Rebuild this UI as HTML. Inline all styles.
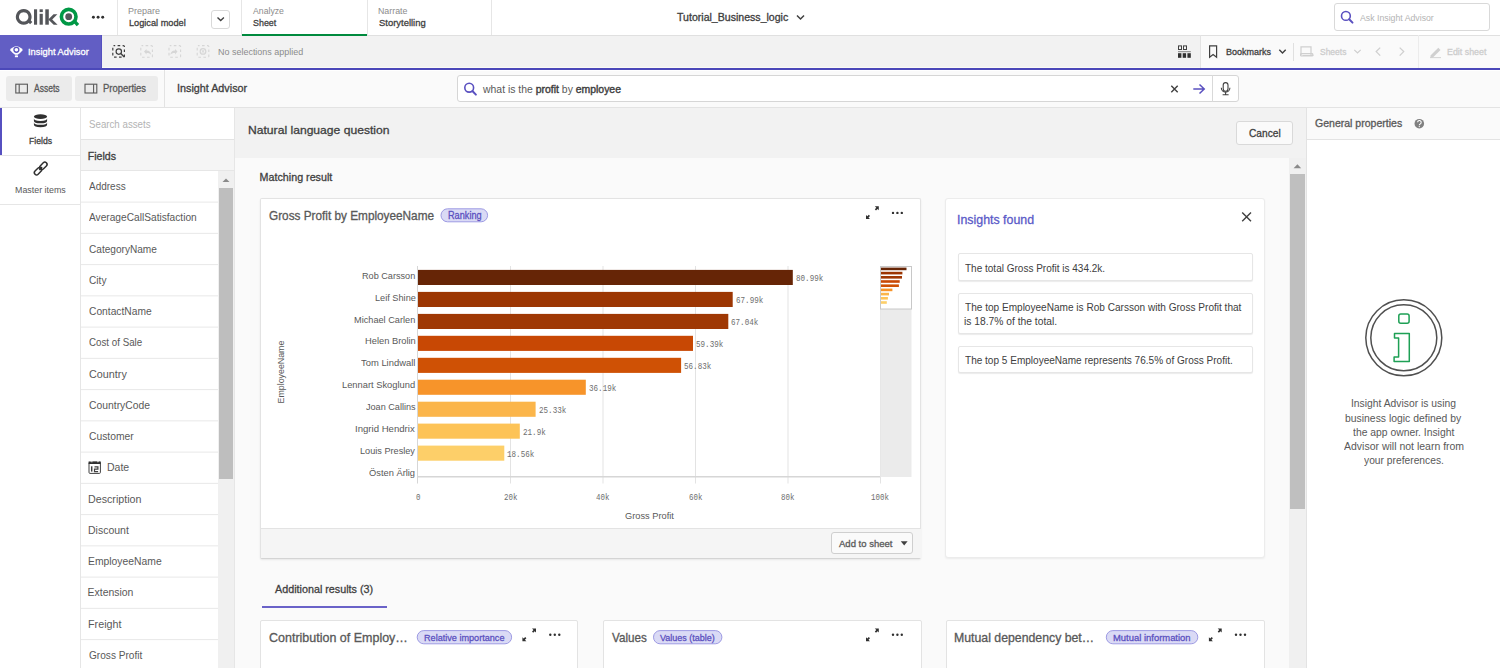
<!DOCTYPE html>
<html><head><meta charset="utf-8">
<style>
*{box-sizing:border-box;margin:0;padding:0}
html,body{width:1500px;height:668px;overflow:hidden;background:#fff;font-family:"Liberation Sans",sans-serif;color:#404040}
.a{position:absolute}
.t{position:absolute;white-space:nowrap;line-height:1;transform-origin:0 0}
.t b{font-weight:700;color:#404040}
svg{position:absolute;overflow:visible}
</style></head><body>
<!-- HEADER -->
<div class="a" style="left:0;top:0;width:1500px;height:36px;background:#fff;border-bottom:1px solid #e0e0e0"></div>
<div class="a" style="left:117px;top:0;width:1px;height:35px;background:#e6e6e6"></div>
<div class="a" style="left:241px;top:0;width:1px;height:35px;background:#e6e6e6"></div>
<div class="a" style="left:367px;top:0;width:1px;height:35px;background:#e6e6e6"></div>
<div class="a" style="left:491px;top:0;width:1px;height:35px;background:#e6e6e6"></div>
<div class="a" style="left:242px;top:34px;width:125px;height:2px;background:#008a3e"></div>
<div class="a" style="left:211px;top:10px;width:19px;height:19px;border:1px solid #d9d9d9;border-radius:3px;background:#fff"></div>
<svg style="left:0;top:0" width="1500" height="35">
  <!-- Qlik logo -->
  <g fill="#54565a">
    <path d="M23.7 9 a7.9 7.9 0 1 0 0.01 0z M23.7 12.2 a4.7 4.7 0 1 1 -0.01 0z" fill-rule="evenodd"/>
    <path d="M27.5 21.5 l2.2-2.2 l2.6 2.6 l-2.2 2.4z"/>
    <rect x="34" y="9.3" width="3.1" height="15.4"/>
    <rect x="39.6" y="9.3" width="3.2" height="2.8"/>
    <rect x="39.6" y="13.8" width="3.2" height="10.9"/>
    <rect x="45.3" y="9.3" width="3.5" height="15.4"/>
    <path d="M48.3 19.5 l5.2-5.2 h3.9 l-5.2 5.2 l5.4 5.2 h-3.9z"/>
  </g>
  <circle cx="68.7" cy="16.7" r="7.3" fill="none" stroke="#009845" stroke-width="3.6"/>
  <circle cx="68.7" cy="16.7" r="3.4" fill="#54565a"/>
  <path d="M72.5 21.5 l2.4-2.2 l4.3 4.6 l-2.5 2.3z" fill="#009845"/>
  <g fill="#303030"><circle cx="93.4" cy="17.2" r="1.45"/><circle cx="98.1" cy="17.2" r="1.45"/><circle cx="102.7" cy="17.2" r="1.45"/></g>
  <path d="M217.5 17.5 l3.2 3 l3.2 -3" fill="none" stroke="#404040" stroke-width="1.4"/>
  <path d="M797 15.5 l3.5 3.5 l3.5 -3.5" fill="none" stroke="#404040" stroke-width="1.5"/>
</svg>
<div class="a" style="left:1334px;top:3px;width:156px;height:28px;border:1px solid #d9d9d9;border-radius:3px;background:#fff"></div>
<svg style="left:1340px;top:10px" width="16" height="16">
  <circle cx="5.9" cy="5.9" r="4.4" fill="none" stroke="#5a50c0" stroke-width="1.6"/>
  <path d="M9.2 9.2 l3.3 3.4" stroke="#5a50c0" stroke-width="2" stroke-linecap="round"/>
</svg>

<!-- TOOLBAR -->
<div class="a" style="left:0;top:36px;width:1500px;height:32px;background:#f2f2f2;border-bottom:1px solid #fafaf6"></div>
<div class="a" style="left:1201px;top:36px;width:299px;height:32px;background:#fafafa"></div>
<div class="a" style="left:1200px;top:35px;width:1px;height:33px;background:#e3e3e3"></div>
<div class="a" style="left:1418px;top:35px;width:1px;height:33px;background:#ececec"></div>
<div class="a" style="left:1293px;top:43px;width:1px;height:18px;background:#e0e0e0"></div>
<div class="a" style="left:0;top:35px;width:102px;height:33px;background:#625ec4;border-right:1px solid #5550c0"></div>
<div class="a" style="left:0;top:68px;width:1500px;height:2px;background:#4b48b9"></div>
<svg style="left:0;top:35px" width="1500" height="33">
  <!-- insight advisor eye/bulb icon -->
  <path d="M9.9 14.9 Q16.4 7.4 22.9 14.9 Q20.2 18 17.7 19.8 L15.1 19.8 Q12.6 18 9.9 14.9z" fill="#fff"/>
  <circle cx="16.4" cy="14.8" r="3.1" fill="#5a55c0"/>
  <circle cx="16.4" cy="14.8" r="1.8" fill="#fff"/>
  <rect x="15.3" y="19.6" width="2.2" height="1" fill="#d8d8f0"/>
  <rect x="14.9" y="20.6" width="3.1" height="1.6" fill="#fff"/>
  <!-- selection tools -->
  <g fill="none" stroke="#404040" stroke-width="1.2" stroke-dasharray="2.6 2.4" stroke-dashoffset="1.2">
    <rect x="112.8" y="10.6" width="11.6" height="11.6" rx="1"/>
  </g>
  <circle cx="118.8" cy="16.6" r="2.7" fill="none" stroke="#404040" stroke-width="1.2"/>
  <path d="M120.8 18.6 l3.4 3.4" stroke="#404040" stroke-width="1.4"/>
  <g fill="none" stroke="#d6d6d6" stroke-width="1.1" stroke-dasharray="2.6 2.4" stroke-dashoffset="1.2">
    <rect x="140.8" y="10.6" width="11.6" height="11.6" rx="1"/>
    <rect x="169" y="10.6" width="11.6" height="11.6" rx="1"/>
    <rect x="197.2" y="10.6" width="11.6" height="11.6" rx="1"/>
  </g>
  <path d="M144 16.5 l2.5-2.5 v1.6 c3 0 4.5 1.5 4.5 4.5 c-0.8-1.6 -2-2.1 -4.5-2.1 v1.6z" fill="#d6d6d6"/>
  <path d="M177.5 16.5 l-2.5-2.5 v1.6 c-3 0 -4.5 1.5 -4.5 4.5 c0.8-1.6 2-2.1 4.5-2.1 v1.6z" fill="#d6d6d6"/>
  <circle cx="203" cy="16.4" r="2.8" fill="none" stroke="#d6d6d6" stroke-width="1.2"/>
  <path d="M201.7 15.1 l2.6 2.6 M204.3 15.1 l-2.6 2.6" stroke="#d6d6d6" stroke-width="1"/>
  <!-- right icons -->
  <g fill="none" stroke="#404040" stroke-width="1">
    <rect x="1178.5" y="10.9" width="3" height="3.6"/>
    <rect x="1183.5" y="10.9" width="3" height="3.6"/>
  </g>
  <rect x="1178" y="16.2" width="12.8" height="1" fill="#808080"/>
  <g fill="#303030">
    <rect x="1178" y="18.2" width="3.4" height="4.6"/>
    <rect x="1182.7" y="18.2" width="3.4" height="4.6"/>
    <rect x="1187.4" y="18.2" width="3.4" height="4.6"/>
  </g>
  <path d="M1209.6 10.9 h7 v11.4 l-3.5-2.8 l-3.5 2.8z" fill="none" stroke="#404040" stroke-width="1.2"/>
  <path d="M1279.3 14.8 l3.2 3.2 l3.2-3.2" fill="none" stroke="#404040" stroke-width="1.4"/>
  <g fill="none" stroke="#cfcfcf" stroke-width="1.2">
    <path d="M1301 20.5 v-8.6 h10 v8.6"/>
    <path d="M1302.5 20.5 h10.3 v-0.8"/>
    <rect x="1300.6" y="18.6" width="12.2" height="2.4" rx="0.8"/>
  </g>
  <path d="M1354.3 14.8 l3.2 3.2 l3.2-3.2" fill="none" stroke="#cfcfcf" stroke-width="1.2"/>
  <path d="M1380.2 12.6 l-4 4 l4 4" fill="none" stroke="#cfcfcf" stroke-width="1.3"/>
  <path d="M1399.7 12.6 l4 4 l-4 4" fill="none" stroke="#cfcfcf" stroke-width="1.3"/>
  <path d="M1430.5 20.5 l7.8-7.8 l2.2 2.2 l-7.8 7.8 h-2.2z" fill="#d0d0d0"/>
  <rect x="1430" y="22.2" width="11" height="0.9" fill="#d0d0d0"/>
</svg>

<!-- ROW3 -->
<div class="a" style="left:0;top:70px;width:1500px;height:38px;background:#fafafa;border-top:1px solid #fff;border-bottom:1px solid #e3e3e3"></div>
<div class="a" style="left:6px;top:76px;width:66px;height:25px;background:#ebebeb;border-radius:3px"></div>
<div class="a" style="left:75px;top:76px;width:83px;height:25px;background:#ebebeb;border-radius:3px"></div>
<div class="a" style="left:164px;top:70px;width:1px;height:37px;background:#e3e3e3"></div>
<div class="a" style="left:457px;top:75px;width:782px;height:27px;background:#fff;border:1px solid #d6d6d6;border-radius:3px"></div>
<div class="a" style="left:1212px;top:75px;width:1px;height:27px;background:#d9d9d9"></div>
<svg style="left:0;top:70px" width="1500" height="37">
  <g fill="none" stroke="#595959" stroke-width="1.1">
    <rect x="15.8" y="14.2" width="11.6" height="8.8"/>
    <path d="M19.2 14.2 v8.8"/>
    <rect x="85" y="14.2" width="11.8" height="8.8"/>
    <path d="M93.6 14.2 v8.8"/>
  </g>
  <circle cx="469.2" cy="17.7" r="4.4" fill="none" stroke="#5a50c0" stroke-width="1.6"/>
  <path d="M472.4 21 l3.5 3.6" stroke="#5a50c0" stroke-width="2" stroke-linecap="round"/>
  <path d="M1171.3 15.8 l6.4 6.4 M1177.7 15.8 l-6.4 6.4" stroke="#404040" stroke-width="1.4"/>
  <path d="M1193.3 19 h11.5 M1199.5 14.5 l4.7 4.5 l-4.7 4.5" fill="none" stroke="#5a50c0" stroke-width="1.5"/>
  <rect x="1223.2" y="12.6" width="4.8" height="8.6" rx="2.4" fill="none" stroke="#404040" stroke-width="1.1"/>
  <path d="M1221.3 17.8 a4.2 4.2 0 0 0 8.6 0 M1225.6 22 v2.6 M1222.6 24.8 h6" fill="none" stroke="#404040" stroke-width="1.1"/>
</svg>

<!-- LEFT NAV -->
<div class="a" style="left:0;top:108px;width:81px;height:560px;background:#fff;border-right:1px solid #e6e6e6"></div>
<div class="a" style="left:0;top:108px;width:2px;height:47px;background:#5650c0"></div>
<div class="a" style="left:0;top:155px;width:80px;height:1px;background:#e6e6e6"></div>
<div class="a" style="left:0;top:204px;width:80px;height:1px;background:#e6e6e6"></div>
<svg style="left:0;top:107px" width="80" height="100">
  <g fill="#303030">
    <ellipse cx="40.5" cy="9.6" rx="6.6" ry="2.4"/>
    <path d="M33.9 11.5 q0 2.4 6.6 2.4 q6.6 0 6.6 -2.4 v2.2 q0 2.6 -6.6 2.6 q-6.6 0 -6.6 -2.6z"/>
    <path d="M33.9 15.4 q0 2.4 6.6 2.4 q6.6 0 6.6 -2.4 v2.2 q0 2.6 -6.6 2.6 q-6.6 0 -6.6 -2.6z"/>
  </g>
  <g fill="none" stroke="#303030" stroke-width="1.5">
    <rect x="41.2" y="54.6" width="4.4" height="8.4" rx="2.2" transform="rotate(45 43.4 58.8)"/>
    <rect x="35.8" y="60" width="4.4" height="8.4" rx="2.2" transform="rotate(45 38 64.2)"/>
    <path d="M39.3 62.9 l2.8-2.8"/>
  </g>
</svg>

<!-- FIELDS LIST -->
<div class="a" style="left:80px;top:108px;width:155px;height:560px;background:#fff;border-left:1px solid #e6e6e6;border-right:1px solid #e6e6e6"></div>
<div class="a" style="left:81px;top:139px;width:153px;height:32px;background:#f5f5f5;border-top:1px solid #e3e3e3;border-bottom:1px solid #e6e6e6"></div>
<div class="a" style="left:218px;top:171px;width:16px;height:497px;background:#f0f0f0"></div>
<div class="a" style="left:219px;top:188px;width:14px;height:291px;background:#bebebe"></div>
<svg style="left:218px;top:171px" width="16" height="20"><path d="M4.5 11 l3.5-3.5 l3.5 3.5z" fill="#8a8a8a"/></svg>
<div id="flist"></div>
<svg style="left:80px;top:107px" width="140" height="561">
  <g fill="#e8e8e8"><rect x="1" y="94.60" width="137" height="1"/><rect x="1" y="125.85" width="137" height="1"/><rect x="1" y="157.10" width="137" height="1"/><rect x="1" y="188.35" width="137" height="1"/><rect x="1" y="219.60" width="137" height="1"/><rect x="1" y="250.85" width="137" height="1"/><rect x="1" y="282.10" width="137" height="1"/><rect x="1" y="313.35" width="137" height="1"/><rect x="1" y="344.60" width="137" height="1"/><rect x="1" y="375.85" width="137" height="1"/><rect x="1" y="407.10" width="137" height="1"/><rect x="1" y="438.35" width="137" height="1"/><rect x="1" y="469.60" width="137" height="1"/><rect x="1" y="500.85" width="137" height="1"/><rect x="1" y="532.10" width="137" height="1"/></g>
  <rect x="9" y="355.2" width="11.4" height="11.2" rx="1" fill="none" stroke="#404040" stroke-width="1"/>
  <path d="M8.6 354.4 h1.6 l0.8 1 h1.6 v-0.8 h4.4 v0.8 h1.4 l0.8-1 h1.6 v2.6 h-12.2z" fill="#303030"/>
  <path d="M11.7 359.3 v5.3" stroke="#404040" stroke-width="1.5"/>
  <path d="M14.5 359.8 h3.4 v2.4 h-3.4 v2.4 h3.6" fill="none" stroke="#404040" stroke-width="1.2"/>
</svg>

<!-- MAIN -->
<div class="a" style="left:235px;top:108px;width:1071px;height:560px;background:#fafafa"></div>
<div class="a" style="left:235px;top:108px;width:1071px;height:49.5px;background:#f2f2f2"></div>
<div class="a" style="left:1236px;top:120.5px;width:57px;height:24.5px;background:#fafafa;border:1px solid #d9d9d9;border-radius:3px"></div>
<div class="a" style="left:1289px;top:158px;width:17px;height:510px;background:#f0f0f0"></div>
<div class="a" style="left:1290px;top:174px;width:15px;height:334.5px;background:#bfbfbf"></div>
<svg style="left:1289px;top:158px" width="17" height="16"><path d="M4.6 10.2 l3.8-4 l3.8 4z" fill="#8a8a8a"/></svg>

<!-- matching result card -->
<div class="a" style="left:259.6px;top:197.5px;width:661.9px;height:361px;background:#fff;border:1px solid #e3e3e3;border-bottom-color:#d4d4d4;border-radius:2px;box-shadow:0 1px 2px rgba(0,0,0,0.08)"></div>
<div class="a" style="left:261px;top:528px;width:659.5px;height:29.5px;background:#f5f5f5;border-top:1px solid #e3e3e3"></div>
<div class="a" style="left:831px;top:532px;width:82px;height:21.5px;background:#fafafa;border:1px solid #cfcfcf;border-radius:3px"></div>
<svg style="left:0;top:0" width="1500" height="668">
  <path d="M900.8 541.3 h6.8 l-3.4 4.2z" fill="#404040"/>
  <!-- badge -->
  <rect x="441" y="208.8" width="46.6" height="13" rx="6.5" fill="#dadaf5" stroke="#9d9ae3" stroke-width="1"/>
  <!-- expand & dots -->
  <g fill="#303030">
    <path d="M874.8 206.3 h4 v4 l-1.3-1.3 l-1.5 1.5 l-1.2-1.2 l1.5-1.5z"/>
    <path d="M870.0 218.9 h-4 v-4 l1.3 1.3 l1.5-1.5 l1.2 1.2 l-1.5 1.5z"/>
    <circle cx="893" cy="212.9" r="1.2"/><circle cx="897.4" cy="212.9" r="1.2"/><circle cx="901.8" cy="212.9" r="1.2"/>
  </g>
  <!-- chart grid -->
  <g fill="#e3e3e3">
    <rect x="510" y="266" width="1" height="217.5"/>
    <rect x="602.5" y="266" width="1" height="217.5"/>
    <rect x="695" y="266" width="1" height="217.5"/>
    <rect x="787.5" y="266" width="1" height="217.5"/>
    <rect x="880" y="266" width="1" height="217.5"/>
  </g>
  <rect x="417" y="266" width="1" height="217.5" fill="#d6d6d6"/>
  <rect x="417" y="476" width="463" height="1.5" fill="#d6d6d6"/>
  <!-- bars -->
  <g>
    <rect x="418" y="269.9" width="374.8" height="15.1" fill="#662506"/>
    <rect x="418" y="291.9" width="314.7" height="15.1" fill="#9c3603"/>
    <rect x="418" y="313.9" width="310.3" height="15.1" fill="#9f3804"/>
    <rect x="418" y="335.8" width="275.0" height="15.1" fill="#c84804"/>
    <rect x="418" y="357.8" width="263.1" height="15.1" fill="#cf5105"/>
    <rect x="418" y="379.7" width="167.8" height="15.1" fill="#f7942a"/>
    <rect x="418" y="401.7" width="117.6" height="15.1" fill="#fbb54a"/>
    <rect x="418" y="423.6" width="101.8" height="15.1" fill="#fdc357"/>
    <rect x="418" y="445.6" width="86.3" height="15.1" fill="#fdcf69"/>
  </g>
  <!-- minimap -->
  <rect x="880.5" y="309" width="31" height="168" fill="#ebebeb"/>
  <rect x="880.5" y="266.5" width="31" height="42.5" fill="#fff" stroke="#c8c8c8" stroke-width="1"/>
  <g>
    <rect x="881" y="267.6" width="25.5" height="2.6" fill="#662506"/>
    <rect x="881" y="271.8" width="21.4" height="2.6" fill="#9c3603"/>
    <rect x="881" y="276" width="21" height="2.6" fill="#9f3804"/>
    <rect x="881" y="280.2" width="18.7" height="2.6" fill="#c84804"/>
    <rect x="881" y="284.4" width="17.9" height="2.6" fill="#cf5105"/>
    <rect x="881" y="288.6" width="11.4" height="2.6" fill="#f7942a"/>
    <rect x="881" y="292.8" width="8" height="2.6" fill="#fbb54a"/>
    <rect x="881" y="297" width="6.9" height="2.6" fill="#fdc357"/>
    <rect x="881" y="301.2" width="5.8" height="2.6" fill="#fdcf69"/>
  </g>
</svg>

<!-- insights card -->
<div class="a" style="left:945.3px;top:197.5px;width:319.7px;height:360px;background:#fff;border:1px solid #ececec;border-radius:3px;box-shadow:0 1px 2px rgba(0,0,0,0.06)"></div>
<div class="a" style="left:957.5px;top:253px;width:295.5px;height:27.5px;background:#fff;border:1px solid #e6e6e6;border-radius:2px;box-shadow:0 1px 1px rgba(0,0,0,0.08)"></div>
<div class="a" style="left:957.5px;top:292.8px;width:295.5px;height:40.8px;background:#fff;border:1px solid #e6e6e6;border-radius:2px;box-shadow:0 1px 1px rgba(0,0,0,0.08)"></div>
<div class="a" style="left:957.5px;top:345.5px;width:295.5px;height:27.5px;background:#fff;border:1px solid #e6e6e6;border-radius:2px;box-shadow:0 1px 1px rgba(0,0,0,0.08)"></div>
<svg style="left:0;top:0" width="1500" height="668">
  <path d="M1242.2 212.4 l8.8 8.8 M1251 212.4 l-8.8 8.8" stroke="#404040" stroke-width="1.4"/>
</svg>

<!-- additional results -->
<div class="a" style="left:262px;top:606px;width:125px;height:2px;background:#6a62c8"></div>
<div class="a" style="left:259.6px;top:620px;width:318.9px;height:60px;background:#fff;border:1px solid #e3e3e3;border-radius:2px"></div>
<div class="a" style="left:603px;top:620px;width:318.5px;height:60px;background:#fff;border:1px solid #e3e3e3;border-radius:2px"></div>
<div class="a" style="left:946px;top:620px;width:318.5px;height:60px;background:#fff;border:1px solid #e3e3e3;border-radius:2px"></div>
<svg style="left:0;top:0" width="1500" height="668">
  <rect x="417.2" y="630.6" width="94.4" height="13.2" rx="6.6" fill="#dadaf5" stroke="#9d9ae3" stroke-width="1"/>
  <rect x="653.5" y="630.6" width="68.4" height="13.2" rx="6.6" fill="#dadaf5" stroke="#9d9ae3" stroke-width="1"/>
  <rect x="1106.3" y="630.6" width="91.5" height="13.2" rx="6.6" fill="#dadaf5" stroke="#9d9ae3" stroke-width="1"/>
  <g fill="#303030">
    <path d="M532.0 628.6 h4 v4 l-1.3-1.3 l-1.5 1.5 l-1.2-1.2 l1.5-1.5z"/>
    <path d="M526.4 641.2 h-4 v-4 l1.3 1.3 l1.5-1.5 l1.2 1.2 l-1.5 1.5z"/>
    <circle cx="550.3" cy="634.7" r="1.2"/><circle cx="554.8" cy="634.7" r="1.2"/><circle cx="559.3" cy="634.7" r="1.2"/>
    <path d="M874.8 628.6 h4 v4 l-1.3-1.3 l-1.5 1.5 l-1.2-1.2 l1.5-1.5z"/>
    <path d="M870.0 641.2 h-4 v-4 l1.3 1.3 l1.5-1.5 l1.2 1.2 l-1.5 1.5z"/>
    <circle cx="893" cy="634.7" r="1.2"/><circle cx="897.4" cy="634.7" r="1.2"/><circle cx="901.8" cy="634.7" r="1.2"/>
    <path d="M1217.7 628.6 h4 v4 l-1.3-1.3 l-1.5 1.5 l-1.2-1.2 l1.5-1.5z"/>
    <path d="M1212.9 641.2 h-4 v-4 l1.3 1.3 l1.5-1.5 l1.2 1.2 l-1.5 1.5z"/>
    <circle cx="1236" cy="634.7" r="1.2"/><circle cx="1240.5" cy="634.7" r="1.2"/><circle cx="1245" cy="634.7" r="1.2"/>
  </g>
</svg>

<!-- RIGHT PANEL -->
<div class="a" style="left:1306px;top:108px;width:194px;height:560px;background:#fff;border-left:1px solid #e3e3e3"></div>
<div class="a" style="left:1307px;top:108px;width:193px;height:31.5px;background:#fafafa;border-bottom:1px solid #e3e3e3"></div>
<svg style="left:0;top:0" width="1500" height="668">
  <circle cx="1419.3" cy="123.7" r="4.8" fill="#808080"/>
  <path d="M1417.6 122.3 a1.8 1.8 0 1 1 2.6 1.6 q-0.9 0.4 -0.9 1.3" fill="none" stroke="#fff" stroke-width="1.1"/>
  <circle cx="1419.3" cy="126.6" r="0.65" fill="#fff"/>
  <circle cx="1403.8" cy="337.8" r="38" fill="none" stroke="#505050" stroke-width="1.5"/>
  <circle cx="1403.8" cy="337.8" r="33" fill="none" stroke="#505050" stroke-width="1.5"/>
  <rect x="1398.8" y="314" width="10.3" height="9.3" rx="2" fill="none" stroke="#1ea055" stroke-width="1.5"/>
  <path d="M1394.5 333.4 h14.8 v28 h-15.2 v-4.5 h4.5 v-19 h-4.1z" fill="none" stroke="#1ea055" stroke-width="1.5" stroke-linejoin="round"/>
</svg>
<div class="t" style="left:127.97px;top:6.61px;font-size:8.7px;font-weight:400;color:#8c8c8c;transform:scaleX(1.0345)">Prepare</div>
<div class="t" style="left:129.00px;top:17.92px;font-size:9.86px;font-weight:400;-webkit-text-stroke:0.3px #404040;color:#404040;transform:scaleX(0.9333)">Logical model</div>
<div class="t" style="left:253.00px;top:6.81px;font-size:8.7px;font-weight:400;color:#8c8c8c;transform:scaleX(1.0000)">Analyze</div>
<div class="t" style="left:253.00px;top:18.32px;font-size:9.86px;font-weight:400;-webkit-text-stroke:0.3px #404040;color:#404040;transform:scaleX(0.9038)">Sheet</div>
<div class="t" style="left:377.59px;top:6.81px;font-size:8.7px;font-weight:400;color:#8c8c8c;transform:scaleX(1.0143)">Narrate</div>
<div class="t" style="left:378.60px;top:18.32px;font-size:9.86px;font-weight:400;-webkit-text-stroke:0.3px #404040;color:#404040;transform:scaleX(0.9592)">Storytelling</div>
<div class="t" style="left:676.50px;top:13.00px;font-size:10.0px;font-weight:400;-webkit-text-stroke:0.3px #404040;color:#404040;transform:scaleX(1.0571)">Tutorial_Business_logic</div>
<div class="t" style="left:1359.80px;top:13.81px;font-size:9.28px;font-weight:400;color:#b3b3b3;transform:scaleX(0.9423)">Ask Insight Advisor</div>
<div class="t" style="left:28.22px;top:47.37px;font-size:9.57px;font-weight:400;-webkit-text-stroke:0.3px #ffffff;color:#ffffff;transform:scaleX(0.9770)">Insight Advisor</div>
<div class="t" style="left:217.82px;top:47.54px;font-size:9.13px;font-weight:400;color:#8c8c8c;transform:scaleX(0.9824)">No selections applied</div>
<div class="t" style="left:1225.90px;top:47.94px;font-size:9.13px;font-weight:400;-webkit-text-stroke:0.3px #404040;color:#404040;transform:scaleX(0.9848)">Bookmarks</div>
<div class="t" style="left:1319.60px;top:46.62px;font-size:9.86px;font-weight:400;-webkit-text-stroke:0.3px #cccccc;color:#cccccc;transform:scaleX(0.8613)">Sheets</div>
<div class="t" style="left:1447.40px;top:46.62px;font-size:9.86px;font-weight:400;-webkit-text-stroke:0.3px #cccccc;color:#cccccc;transform:scaleX(0.9000)">Edit sheet</div>
<div class="t" style="left:34.30px;top:84.40px;font-size:10.0px;font-weight:400;-webkit-text-stroke:0.3px #595959;color:#595959;transform:scaleX(0.8500)">Assets</div>
<div class="t" style="left:103.05px;top:84.40px;font-size:10.0px;font-weight:400;-webkit-text-stroke:0.3px #595959;color:#595959;transform:scaleX(0.9455)">Properties</div>
<div class="t" style="left:177.47px;top:84.33px;font-size:10.43px;font-weight:400;-webkit-text-stroke:0.3px #404040;color:#404040;transform:scaleX(1.0343)">Insight Advisor</div>
<div class="t" style="left:483.00px;top:84.78px;font-size:10.14px;font-weight:400;color:#595959;transform:scaleX(1.0299)">what is the <span style="-webkit-text-stroke:0.4px #404040;color:#404040">profit</span> by <span style="-webkit-text-stroke:0.4px #404040;color:#404040">employee</span></div>
<div class="t" style="left:29.10px;top:137.41px;font-size:9.28px;font-weight:400;-webkit-text-stroke:0.3px #404040;color:#404040;transform:scaleX(0.9360)">Fields</div>
<div class="t" style="left:14.84px;top:185.71px;font-size:9.28px;font-weight:400;color:#595959;transform:scaleX(0.9577)">Master items</div>
<div class="t" style="left:89.48px;top:119.21px;font-size:10.58px;font-weight:400;color:#b3b3b3;transform:scaleX(0.9182)">Search assets</div>
<div class="t" style="left:87.80px;top:151.21px;font-size:10.58px;font-weight:400;-webkit-text-stroke:0.3px #404040;color:#404040;transform:scaleX(1.0000)">Fields</div>
<div class="t" style="left:88.60px;top:182.13px;font-size:10.43px;font-weight:400;color:#595959;transform:scaleX(0.9579)">Address</div>
<div class="t" style="left:88.60px;top:213.38px;font-size:10.43px;font-weight:400;color:#595959;transform:scaleX(0.9755)">AverageCallSatisfaction</div>
<div class="t" style="left:88.60px;top:244.63px;font-size:10.43px;font-weight:400;color:#595959;transform:scaleX(0.9686)">CategoryName</div>
<div class="t" style="left:88.60px;top:275.88px;font-size:10.43px;font-weight:400;color:#595959;transform:scaleX(0.9722)">City</div>
<div class="t" style="left:88.60px;top:307.13px;font-size:10.43px;font-weight:400;color:#595959;transform:scaleX(0.9828)">ContactName</div>
<div class="t" style="left:88.60px;top:338.38px;font-size:10.43px;font-weight:400;color:#595959;transform:scaleX(0.9368)">Cost of Sale</div>
<div class="t" style="left:88.60px;top:369.63px;font-size:10.43px;font-weight:400;color:#595959;transform:scaleX(1.0361)">Country</div>
<div class="t" style="left:88.60px;top:400.88px;font-size:10.43px;font-weight:400;color:#595959;transform:scaleX(0.9934)">CountryCode</div>
<div class="t" style="left:88.60px;top:432.13px;font-size:10.43px;font-weight:400;color:#595959;transform:scaleX(0.9889)">Customer</div>
<div class="t" style="left:107.49px;top:463.38px;font-size:10.43px;font-weight:400;color:#595959;transform:scaleX(1.0095)">Date</div>
<div class="t" style="left:87.57px;top:494.63px;font-size:10.43px;font-weight:400;color:#595959;transform:scaleX(1.0255)">Description</div>
<div class="t" style="left:87.59px;top:525.88px;font-size:10.43px;font-weight:400;color:#595959;transform:scaleX(1.0075)">Discount</div>
<div class="t" style="left:87.61px;top:557.13px;font-size:10.43px;font-weight:400;color:#595959;transform:scaleX(0.9932)">EmployeeName</div>
<div class="t" style="left:87.60px;top:588.38px;font-size:10.43px;font-weight:400;color:#595959;transform:scaleX(1.0000)">Extension</div>
<div class="t" style="left:87.57px;top:619.63px;font-size:10.43px;font-weight:400;color:#595959;transform:scaleX(1.0323)">Freight</div>
<div class="t" style="left:88.60px;top:650.88px;font-size:10.43px;font-weight:400;color:#595959;transform:scaleX(0.9691)">Gross Profit</div>
<div class="t" style="left:247.97px;top:124.12px;font-size:11.74px;font-weight:400;-webkit-text-stroke:0.3px #404040;color:#404040;transform:scaleX(1.0331)">Natural language question</div>
<div class="t" style="left:1249.00px;top:128.21px;font-size:11.16px;font-weight:400;-webkit-text-stroke:0.3px #404040;color:#404040;transform:scaleX(0.9118)">Cancel</div>
<div class="t" style="left:259.60px;top:172.19px;font-size:10.72px;font-weight:400;-webkit-text-stroke:0.3px #404040;color:#404040;transform:scaleX(1.0000)">Matching result</div>
<div class="t" style="left:269.40px;top:209.56px;font-size:12.17px;font-weight:400;-webkit-text-stroke:0.3px #595959;color:#595959;transform:scaleX(0.9694)">Gross Profit by EmployeeName</div>
<div class="t" style="left:447.69px;top:211.28px;font-size:10.14px;font-weight:400;-webkit-text-stroke:0.3px #5a50c0;color:#5a50c0;transform:scaleX(0.9056)">Ranking</div>
<div class="t" style="left:839.10px;top:538.92px;font-size:9.86px;font-weight:400;-webkit-text-stroke:0.3px #595959;color:#595959;transform:scaleX(0.9679)">Add to sheet</div>
<div class="t" style="left:275.30px;top:583.85px;font-size:11.59px;font-weight:400;-webkit-text-stroke:0.3px #404040;color:#404040;transform:scaleX(0.9295)">Additional results (3)</div>
<div class="t" style="left:268.70px;top:631.56px;font-size:12.17px;font-weight:400;-webkit-text-stroke:0.3px #595959;color:#595959;transform:scaleX(1.0276)">Contribution of Employ…</div>
<div class="t" style="left:424.30px;top:633.32px;font-size:9.86px;font-weight:400;-webkit-text-stroke:0.3px #5a50c0;color:#5a50c0;transform:scaleX(0.9253)">Relative importance</div>
<div class="t" style="left:612.00px;top:632.16px;font-size:12.17px;font-weight:400;-webkit-text-stroke:0.3px #595959;color:#595959;transform:scaleX(0.9583)">Values</div>
<div class="t" style="left:660.00px;top:633.32px;font-size:9.86px;font-weight:400;-webkit-text-stroke:0.3px #5a50c0;color:#5a50c0;transform:scaleX(0.9117)">Values (table)</div>
<div class="t" style="left:954.39px;top:631.66px;font-size:12.17px;font-weight:400;-webkit-text-stroke:0.3px #595959;color:#595959;transform:scaleX(1.0110)">Mutual dependency bet…</div>
<div class="t" style="left:1113.20px;top:633.22px;font-size:9.86px;font-weight:400;-webkit-text-stroke:0.3px #5a50c0;color:#5a50c0;transform:scaleX(0.9580)">Mutual information</div>
<div class="t" style="left:957.35px;top:212.82px;font-size:13.04px;font-weight:400;-webkit-text-stroke:0.3px #5a5ac8;color:#5a5ac8;transform:scaleX(0.9500)">Insights found</div>
<div class="t" style="left:964.90px;top:263.01px;font-size:10.58px;font-weight:400;color:#404040;transform:scaleX(0.9456)">The total Gross Profit is 434.2k.</div>
<div class="t" style="left:964.90px;top:301.81px;font-size:10.58px;font-weight:400;color:#404040;transform:scaleX(0.9517)">The top EmployeeName is Rob Carsson with Gross Profit that</div>
<div class="t" style="left:963.93px;top:315.71px;font-size:10.58px;font-weight:400;color:#404040;transform:scaleX(0.9713)">is 18.7% of the total.</div>
<div class="t" style="left:964.90px;top:355.31px;font-size:10.58px;font-weight:400;color:#404040;transform:scaleX(0.9488)">The top 5 EmployeeName represents 76.5% of Gross Profit.</div>
<div class="t" style="left:1314.70px;top:119.08px;font-size:10.14px;font-weight:400;-webkit-text-stroke:0.3px #595959;color:#595959;transform:scaleX(1.0393)">General properties</div>
<div class="t" style="left:1350.51px;top:399.33px;font-size:10.43px;font-weight:400;color:#595959;transform:scaleX(0.9905)">Insight Advisor is using</div>
<div class="t" style="left:1345.15px;top:413.53px;font-size:10.43px;font-weight:400;color:#595959;transform:scaleX(0.9974)">business logic defined by</div>
<div class="t" style="left:1352.85px;top:427.73px;font-size:10.43px;font-weight:400;color:#595959;transform:scaleX(0.9931)">the app owner. Insight</div>
<div class="t" style="left:1343.60px;top:441.93px;font-size:10.43px;font-weight:400;color:#595959;transform:scaleX(1.0067)">Advisor will not learn from</div>
<div class="t" style="left:1364.10px;top:456.13px;font-size:10.43px;font-weight:400;color:#595959;transform:scaleX(0.9850)">your preferences.</div>
<div class="t" style="left:361.87px;top:270.62px;font-size:9.86px;font-weight:400;color:#595959;transform:scaleX(0.9268)">Rob Carsson</div>
<div class="t" style="left:374.57px;top:292.57px;font-size:9.86px;font-weight:400;color:#595959;transform:scaleX(0.9333)">Leif Shine</div>
<div class="t" style="left:354.07px;top:314.52px;font-size:9.86px;font-weight:400;color:#595959;transform:scaleX(0.9328)">Michael Carlen</div>
<div class="t" style="left:364.55px;top:336.47px;font-size:9.86px;font-weight:400;color:#595959;transform:scaleX(0.9462)">Helen Brolin</div>
<div class="t" style="left:361.20px;top:358.42px;font-size:9.86px;font-weight:400;color:#595959;transform:scaleX(0.9554)">Tom Lindwall</div>
<div class="t" style="left:341.75px;top:380.37px;font-size:9.86px;font-weight:400;color:#595959;transform:scaleX(0.9474)">Lennart Skoglund</div>
<div class="t" style="left:365.70px;top:402.32px;font-size:9.86px;font-weight:400;color:#595959;transform:scaleX(0.9245)">Joan Callins</div>
<div class="t" style="left:355.22px;top:424.27px;font-size:9.86px;font-weight:400;color:#595959;transform:scaleX(0.9750)">Ingrid Hendrix</div>
<div class="t" style="left:359.87px;top:446.22px;font-size:9.86px;font-weight:400;color:#595959;transform:scaleX(0.9293)">Louis Presley</div>
<div class="t" style="left:369.30px;top:468.17px;font-size:9.86px;font-weight:400;color:#595959;transform:scaleX(0.9458)">Östen Ärlig</div>
<div class="t" style="left:795.81px;top:273.99px;font-family:'Liberation Mono',monospace;font-size:9.56px;font-weight:400;color:#6e6e6e;transform:scaleX(0.7939)">80.99k</div>
<div class="t" style="left:735.71px;top:295.94px;font-family:'Liberation Mono',monospace;font-size:9.56px;font-weight:400;color:#6e6e6e;transform:scaleX(0.7939)">67.99k</div>
<div class="t" style="left:731.31px;top:317.89px;font-family:'Liberation Mono',monospace;font-size:9.56px;font-weight:400;color:#6e6e6e;transform:scaleX(0.7939)">67.04k</div>
<div class="t" style="left:696.01px;top:339.84px;font-family:'Liberation Mono',monospace;font-size:9.56px;font-weight:400;color:#6e6e6e;transform:scaleX(0.7939)">59.39k</div>
<div class="t" style="left:684.11px;top:361.79px;font-family:'Liberation Mono',monospace;font-size:9.56px;font-weight:400;color:#6e6e6e;transform:scaleX(0.7939)">56.83k</div>
<div class="t" style="left:588.81px;top:383.74px;font-family:'Liberation Mono',monospace;font-size:9.56px;font-weight:400;color:#6e6e6e;transform:scaleX(0.7939)">36.19k</div>
<div class="t" style="left:538.61px;top:405.69px;font-family:'Liberation Mono',monospace;font-size:9.56px;font-weight:400;color:#6e6e6e;transform:scaleX(0.7939)">25.33k</div>
<div class="t" style="left:522.81px;top:427.64px;font-family:'Liberation Mono',monospace;font-size:9.56px;font-weight:400;color:#6e6e6e;transform:scaleX(0.7939)">21.9k</div>
<div class="t" style="left:507.31px;top:449.59px;font-family:'Liberation Mono',monospace;font-size:9.56px;font-weight:400;color:#6e6e6e;transform:scaleX(0.7939)">18.56k</div>
<div class="t" style="left:415.62px;top:493.05px;font-family:'Liberation Mono',monospace;font-size:9.41px;font-weight:400;color:#6e6e6e;transform:scaleX(0.7939)">0</div>
<div class="t" style="left:503.75px;top:493.05px;font-family:'Liberation Mono',monospace;font-size:9.41px;font-weight:400;color:#6e6e6e;transform:scaleX(0.7939)">20k</div>
<div class="t" style="left:596.25px;top:493.05px;font-family:'Liberation Mono',monospace;font-size:9.41px;font-weight:400;color:#6e6e6e;transform:scaleX(0.7939)">40k</div>
<div class="t" style="left:688.75px;top:493.05px;font-family:'Liberation Mono',monospace;font-size:9.41px;font-weight:400;color:#6e6e6e;transform:scaleX(0.7939)">60k</div>
<div class="t" style="left:781.25px;top:493.05px;font-family:'Liberation Mono',monospace;font-size:9.41px;font-weight:400;color:#6e6e6e;transform:scaleX(0.7939)">80k</div>
<div class="t" style="left:871.37px;top:493.05px;font-family:'Liberation Mono',monospace;font-size:9.41px;font-weight:400;color:#6e6e6e;transform:scaleX(0.7939)">100k</div>
<div class="t" style="left:625.00px;top:510.97px;font-size:9.57px;font-weight:400;color:#595959;transform:scaleX(0.9680)">Gross Profit</div><div class="t" style="left:243.5px;top:367px;font-size:9.6px;color:#595959;width:74px;text-align:center;transform:rotate(-90deg) scaleX(0.92);transform-origin:37px 5px">EmployeeName</div>

</body></html>
